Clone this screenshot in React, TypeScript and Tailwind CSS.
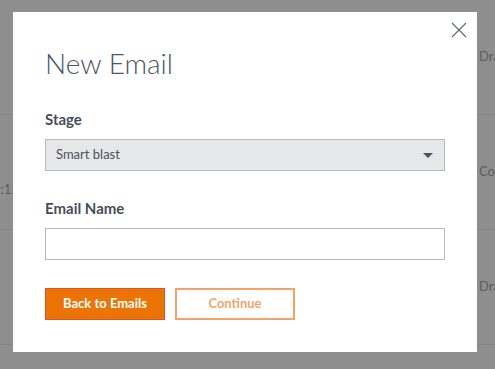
const rows = [
  { left: '', right: 'Draft' },
  { left: '9:15 AM', right: 'Complete' },
  { left: '', right: 'Draft' },
];

function BackgroundTable() {
  return (
    <div className="flex flex-col">
      {rows.map((r, i) => (
        <div key={i} className="flex h-[115px] items-center border-b border-[#828282] text-[13px] text-[#5c5c5c]">
          <span className={i === 1 ? 'ml-[-7px] mt-[36px] w-[60px] whitespace-nowrap' : 'w-[60px]'}>{r.left}</span>
          <span className="ml-auto w-[16px] overflow-hidden whitespace-nowrap">{r.right}</span>
        </div>
      ))}
    </div>
  );
}

function CloseIcon() {
  return (
    <svg width="16" height="16" viewBox="0 0 16 16" className="text-[#5f6670]">
      <path d="M1 1L15 15M15 1L1 15" stroke="currentColor" strokeWidth="1.1" />
    </svg>
  );
}

export default function App() {
  return (
    <div
      className="relative h-[369px] w-[495px] overflow-hidden bg-[#8e8e8e]"
      style={{ fontFamily: 'Lato, "Open Sans", sans-serif' }}
    >
      <BackgroundTable />

      <div className="absolute left-[13px] top-[12px] h-[340px] w-[464px] bg-white px-8 pt-[34px]">
        <button className="absolute right-[10px] top-[10px]">
          <CloseIcon />
        </button>

        <h2 className="text-[28px] font-light leading-[34px] text-[#4d5461]">New Email</h2>

        <label className="mt-[29px] block text-[15px] font-bold leading-5 text-[#474d58]">Stage</label>
        <div className="mt-[10px] flex h-[32px] w-[400px] items-center border border-[#b9b9b9] bg-[#e6e7e9] pl-[10px] pr-[11px]">
          <span className="text-[13px] text-[#4b505a]">Smart blast</span>
          <svg width="10" height="5" viewBox="0 0 10 5" className="ml-auto">
            <path d="M0 0H10L5 5Z" fill="#4e535b" />
          </svg>
        </div>

        <label className="mt-[27px] block text-[15px] font-bold leading-5 text-[#474d58]">Email Name</label>
        <input
          type="text"
          className="mt-[10px] block h-[32px] w-[400px] border border-[#b9b9b9] bg-white px-[10px] text-[13px] outline-none"
        />

        <div className="mt-[28px] flex gap-[10px]">
          <button className="h-[32px] w-[120px] border border-[#d9542b] bg-[#ec7405] text-[13px] font-bold text-white">
            Back to Emails
          </button>
          <button className="h-[32px] w-[120px] border-2 border-[#f2a467] bg-white text-[13px] font-bold text-[#f2a467]">
            Continue
          </button>
        </div>
      </div>
    </div>
  );
}
